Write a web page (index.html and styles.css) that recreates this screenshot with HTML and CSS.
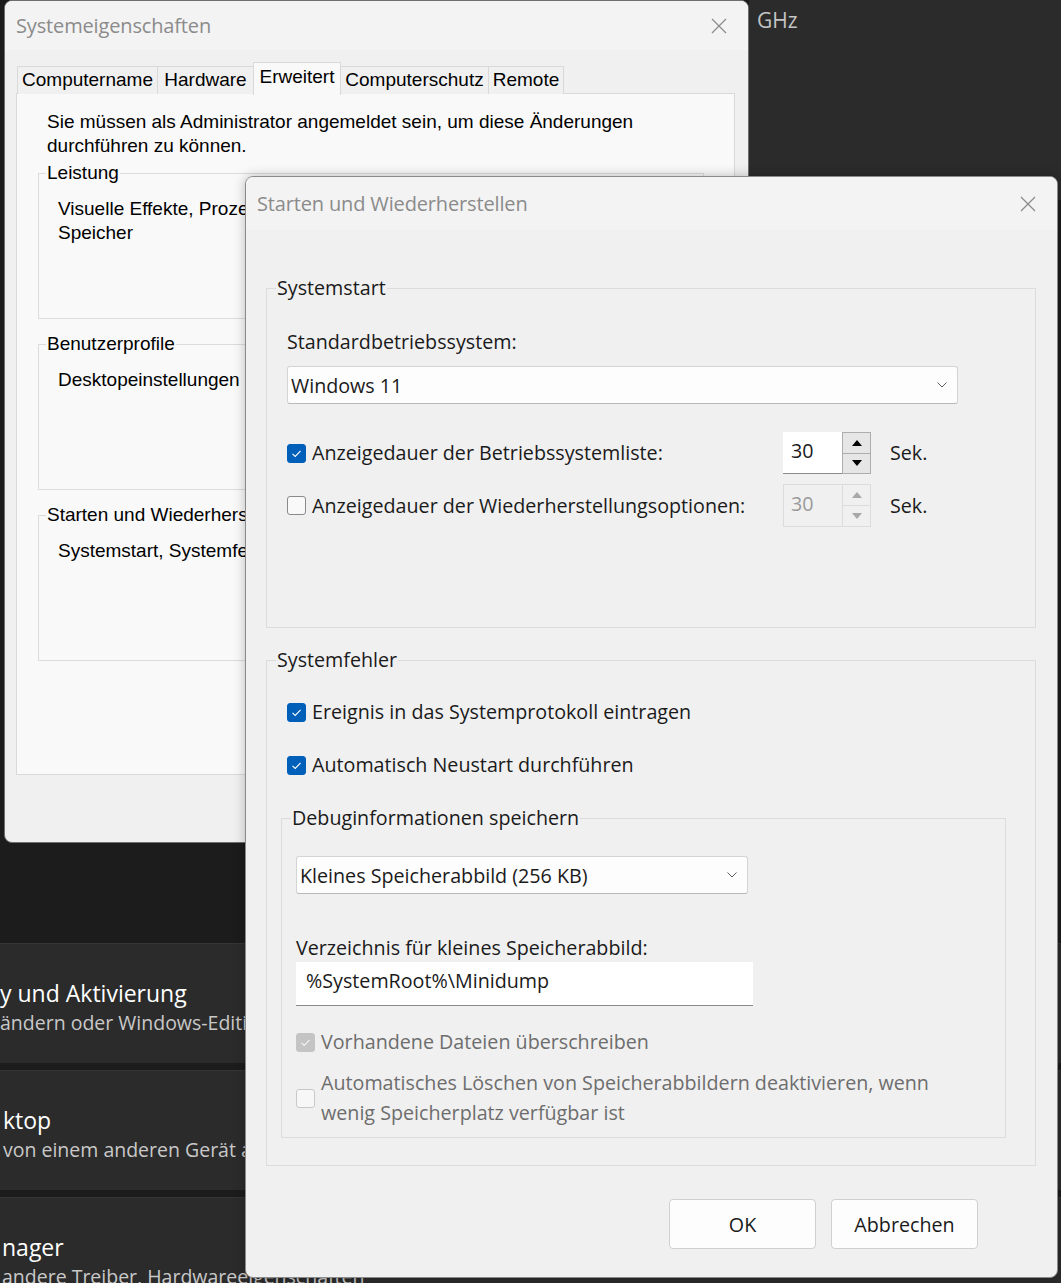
FILE: index.html
```html
<!DOCTYPE html>
<html lang="de">
<head>
<meta charset="utf-8">
<title>Starten und Wiederherstellen</title>
<link rel="stylesheet" href="styles.css">
</head>
<body>
<div class="desktop">
  <div class="bgapp">
    <div class="specs"><span class="ghz">GHz</span></div>
    <div class="cards">
      <div class="card card-a"><div class="c-title">y und Aktivierung</div><div class="c-sub">ändern oder Windows-Edition aktualisieren</div></div>
      <div class="card card-b"><div class="c-title">ktop</div><div class="c-sub">von einem anderen Gerät aus steuern</div></div>
      <div class="card card-c"><div class="c-title">nager</div><div class="c-sub">andere Treiber, Hardwareeigenschaften</div></div>
    </div>
  </div>

  <div class="win win1">
    <div class="titlebar tb1">
      <span class="title">Systemeigenschaften</span>
      <svg class="close" viewBox="0 0 16 16" width="16" height="16"><path d="M1 1 L15 15 M15 1 L1 15" stroke="#8a8a8a" stroke-width="1.2" fill="none"/></svg>
    </div>
    <div class="w1body">
      <div class="tabs">
        <div class="tab t-name">Computername</div>
        <div class="tab t-hw">Hardware</div>
        <div class="tab t-adv active">Erweitert</div>
        <div class="tab t-prot">Computerschutz</div>
        <div class="tab t-rem">Remote</div>
      </div>
      <div class="panel">
        <p class="note">Sie müssen als Administrator angemeldet sein, um diese Änderungen<br>durchführen zu können.</p>
        <fieldset class="gb1"><legend>Leistung</legend><div class="gb1-in">Visuelle Effekte, Prozessorzeitplanung, Speichernutzung und virtueller<br>Speicher</div></fieldset>
        <fieldset class="gb1"><legend>Benutzerprofile</legend><div class="gb1-in">Desktopeinstellungen bezüglich der Anmeldung</div></fieldset>
        <fieldset class="gb1"><legend>Starten und Wiederherstellen</legend><div class="gb1-in">Systemstart, Systemfehler und Debuginformationen</div></fieldset>
      </div>
    </div>
  </div>

  <div class="win win2">
    <div class="titlebar tb2">
      <span class="title">Starten und Wiederherstellen</span>
      <svg class="close" viewBox="0 0 16 16" width="16" height="16"><path d="M1 1 L15 15 M15 1 L1 15" stroke="#8a8a8a" stroke-width="1.2" fill="none"/></svg>
    </div>
    <div class="w2body">
      <fieldset class="gb2">
        <legend>Systemstart</legend>
        <div class="gb2-in start-in">
          <div class="lbl">Standardbetriebssystem:</div>
          <div class="combo combo-os"><span>Windows 11</span><svg class="chev" viewBox="0 0 10 6" width="10" height="6"><path d="M0.5 0.5 L5 5 L9.5 0.5" stroke="#5f5f5f" stroke-width="1" fill="none"/></svg></div>
          <div class="spinrow sr1">
            <div class="chk-line"><span class="cb on"><svg viewBox="0 0 19 19" width="19" height="19"><path d="M5.5 9.8 L8.2 12.4 L13.6 6.8" stroke="#fff" stroke-width="1.1" fill="none"/></svg></span><span>Anzeigedauer der Betriebssystemliste:</span></div>
            <div class="spin">
              <div class="spin-val">30</div>
              <div class="spin-btns"><div class="sb"><span class="tri up"></span></div><div class="sb"><span class="tri down"></span></div></div>
            </div>
            <div class="sek">Sek.</div>
          </div>
          <div class="spinrow sr2">
            <div class="chk-line"><span class="cb"></span><span>Anzeigedauer der Wiederherstellungsoptionen:</span></div>
            <div class="spin dis">
              <div class="spin-val">30</div>
              <div class="spin-btns"><div class="sb"><span class="tri up"></span></div><div class="sb"><span class="tri down"></span></div></div>
            </div>
            <div class="sek">Sek.</div>
          </div>
        </div>
      </fieldset>

      <fieldset class="gb2 gb-err">
        <legend>Systemfehler</legend>
        <div class="gb2-in err-in">
          <div class="chk-line r1"><span class="cb on"><svg viewBox="0 0 19 19" width="19" height="19"><path d="M5.5 9.8 L8.2 12.4 L13.6 6.8" stroke="#fff" stroke-width="1.1" fill="none"/></svg></span><span>Ereignis in das Systemprotokoll eintragen</span></div>
          <div class="chk-line r2"><span class="cb on"><svg viewBox="0 0 19 19" width="19" height="19"><path d="M5.5 9.8 L8.2 12.4 L13.6 6.8" stroke="#fff" stroke-width="1.1" fill="none"/></svg></span><span>Automatisch Neustart durchführen</span></div>
          <fieldset class="gb2 gb-debug">
            <legend>Debuginformationen speichern</legend>
            <div class="debug-in">
              <div class="combo combo-dump"><span>Kleines Speicherabbild (256 KB)</span><svg class="chev" viewBox="0 0 10 6" width="10" height="6"><path d="M0.5 0.5 L5 5 L9.5 0.5" stroke="#5f5f5f" stroke-width="1" fill="none"/></svg></div>
              <div class="lbl dirlbl">Verzeichnis für kleines Speicherabbild:</div>
              <div class="textbox">%SystemRoot%\Minidump</div>
              <div class="chk-line dis-line d1"><span class="cb on dis"><svg viewBox="0 0 19 19" width="19" height="19"><path d="M5.5 9.8 L8.2 12.4 L13.6 6.8" stroke="#f4f4f4" stroke-width="1.1" fill="none"/></svg></span><span>Vorhandene Dateien überschreiben</span></div>
              <div class="chk-line dis-line d2"><span class="cb dis"></span><span class="two">Automatisches Löschen von Speicherabbildern deaktivieren, wenn<br>wenig Speicherplatz verfügbar ist</span></div>
            </div>
          </fieldset>
        </div>
      </fieldset>

      <div class="btnrow">
        <button class="btn">OK</button>
        <button class="btn">Abbrechen</button>
      </div>
    </div>
  </div>
</div>
</body>
</html>
```

FILE: styles.css
```css
* { box-sizing: border-box; }
html, body { margin: 0; padding: 0; }
body {
  width: 1061px;
  height: 1283px;
  overflow: hidden;
  background: #1c1c1c;
  font-family: "Open Sans", "Noto Sans", sans-serif;
}
.desktop { position: relative; width: 1061px; height: 1283px; overflow: hidden; }

/* background settings app */
.bgapp {
  position: absolute;
  inset: 0;
  display: flex;
  flex-direction: column;
  background: #1c1c1c;
}
.specs {
  flex: 0 0 auto;
  margin-left: 749px;
  height: 200px;
  background: #2b2b2b;
  padding: 4px 0 0 8px;
}
.ghz { color: #c4c4c4; font-size: 21px; line-height: 32px; }
.cards {
  flex: 0 0 auto;
  margin-top: 743px;
  display: flex;
  flex-direction: column;
  gap: 7px;
  width: 1061px;
}
.card {
  flex: 0 0 auto;
  background: #2b2b2b;
  border-top: 1px solid #353535;
  padding-top: 34px;
  color: #fff;
  white-space: nowrap;
  overflow: hidden;
}
.card-a { height: 120px; }
.card-b { height: 120px; padding-left: 3px; }
.card-c { height: 120px; padding-left: 2px; }
.c-title { font-size: 23px; line-height: 30px; color: #ffffff; }
.c-sub { font-size: 19.5px; line-height: 30px; color: #c8c8c8; }

/* windows */
.win {
  position: absolute;
  background: #f0f0f0;
  border: 1px solid #6e6e6e;
  border-radius: 8px;
  overflow: hidden;
}
.win1 { left: 4px; top: 0; width: 745px; height: 843px; }
.win2 { left: 245px; top: 176px; width: 813px; height: 1102px; border-color: #8a8a8a; box-shadow: 0 0 12px rgba(0,0,0,0.25); }

.titlebar {
  display: flex;
  align-items: center;
  justify-content: space-between;
  background: #f3f3f3;
}
.tb1 { height: 49px; padding: 0 21px 0 11px; }
.tb2 { height: 53px; padding: 0 21px 0 11px; }
.title { color: #8b8b8b; font-size: 20px; letter-spacing: -0.15px; }
.close { display: block; }

/* window 1 (classic dialog) */
.w1body {
  padding: 12px 13px 0 11px;
  font-family: "Liberation Sans", Arial, sans-serif;
  font-size: 19px;
  color: #000;
}
.tabs {
  display: flex;
  align-items: flex-end;
  height: 32px;
  padding-left: 1px;
  position: relative;
  z-index: 2;
}
.tab {
  height: 28px;
  line-height: 26px;
  padding: 0;
  text-align: center;
  white-space: nowrap;
  border: 1px solid #d9d9d9;
  border-bottom: none;
  background: #f0f0f0;
  margin-right: -1px;
}
.t-name { width: 141px; }
.t-hw { width: 97px; }
.t-adv { width: 88px; }
.t-prot { width: 149px; }
.t-rem { width: 76px; }
.tab.active {
  line-height: 28px;
  background: #f9f9f9;
  position: relative;
  z-index: 3;
  margin-bottom: -1px;
  height: 33px;
}
.panel {
  height: 682px;
  background: #f9f9f9;
  border: 1px solid #d9d9d9;
  padding: 16px 0 0 21px;
  margin-top: -1px;
}
.note { margin: 0 0 3px 9px; line-height: 24px; }
.gb1 {
  margin: 0 0 13px 0;
  padding: 0;
  width: 666px;
  border: 1px solid #dcdcdc;
}
.gb1 legend { margin-left: 7px; padding: 0 1px; line-height: 24px; }
.gb1-in { height: 133px; padding: 12px 19px; line-height: 24px; white-space: nowrap; }

/* window 2 */
.w2body {
  padding: 44px 21px 0 20px;
  font-size: 19.7px;
  color: #1a1a1a;
}
.gb2 {
  margin: 0;
  padding: 0;
  border: 1px solid #dcdcdc;
  min-width: 0;
}
.gb2 legend { margin-left: 9px; padding: 0 1px; line-height: 28px; }
.start-in { padding: 26px 20px 100px 20px; }
.lbl { line-height: 28px; }
.combo {
  display: flex;
  align-items: center;
  justify-content: space-between;
  background: #fdfdfd;
  border: 1px solid #d4d4d4;
  border-bottom-color: #b9b9b9;
  border-radius: 3px;
  padding: 0 10px 0 3px;
  white-space: nowrap;
}
.combo-os { margin-top: 10px; height: 38px; width: 671px; }
.chev { display: block; }

.spinrow {
  display: grid;
  grid-template-columns: 496px 88px auto;
  align-items: center;
}
.sr1 { margin-top: 28px; height: 42px; }
.sr2 { margin-top: 10px; height: 43px; }
.chk-line { display: flex; align-items: center; gap: 6px; line-height: 28px; white-space: nowrap; }
.cb {
  width: 19px;
  height: 19px;
  flex: 0 0 19px;
  border: 1px solid #8a8a8a;
  border-radius: 3px;
  background: #f9f9f9;
  display: block;
}
.cb.on { background: #005fb8; border-color: #005fb8; }
.cb svg { display: block; margin: -1px; }
.cb.dis { border-color: #c8c8c8; background: #f7f7f7; }
.cb.on.dis { background: #c4c4c4; border-color: #c4c4c4; }

.spin { display: flex; height: 100%; }
.spin-val {
  width: 59px;
  background: #ffffff;
  border-bottom: 1px solid #8a8a8a;
  padding: 4px 0 0 8px;
  line-height: 30px;
}
.spin-btns {
  width: 29px;
  display: flex;
  flex-direction: column;
  border: 1px solid #adadad;
  background: #e6e6e6;
}
.sb { flex: 1; display: flex; align-items: center; justify-content: center; }
.sb + .sb { border-top: 1px solid #adadad; }
.tri { width: 0; height: 0; border-left: 5px solid transparent; border-right: 5px solid transparent; }
.tri.up { border-bottom: 6px solid #000; }
.tri.down { border-top: 6px solid #000; }
.spin.dis .spin-val { background: #f0f0f0; border: 1px solid #dcdcdc; border-right: none; color: #9a9a9a; padding-left: 7px; }
.spin.dis .spin-btns { border-color: #dcdcdc; background: #f0f0f0; }
.spin.dis .sb + .sb { border-top-color: #dcdcdc; }
.spin.dis .tri.up { border-bottom-color: #a8a8a8; }
.spin.dis .tri.down { border-top-color: #a8a8a8; }
.sek { margin-left: 19px; line-height: 28px; }

.gb-err { margin-top: 18px; }
.err-in { padding: 24px 29px 27px 20px; }
.r2 { margin-top: 25px; }
.gb-debug { margin: 25px 0 0 -6px; }
.debug-in { padding: 24px 14px 9px 14px; }
.combo-dump { height: 38px; width: 452px; }
.dirlbl { margin-top: 40px; }
.textbox {
  width: 457px;
  height: 44px;
  background: #ffffff;
  border-bottom: 1px solid #8a8a8a;
  padding: 5px 0 0 10px;
  line-height: 28px;
}
.dis-line { color: #6d6d6d; }
.d1 { margin-top: 22px; }
.d2 { margin-top: 12px; }
.two { line-height: 30px; }

.btnrow {
  display: flex;
  justify-content: flex-end;
  gap: 15px;
  margin: 33px 58px 0 0;
}
.btn {
  width: 147px;
  height: 50px;
  background: #fdfdfd;
  border: 1px solid #d0d0d0;
  border-radius: 4px;
  font-family: "Open Sans", "Noto Sans", sans-serif;
  font-size: 19.7px;
  color: #1a1a1a;
  padding: 0;
}
```
